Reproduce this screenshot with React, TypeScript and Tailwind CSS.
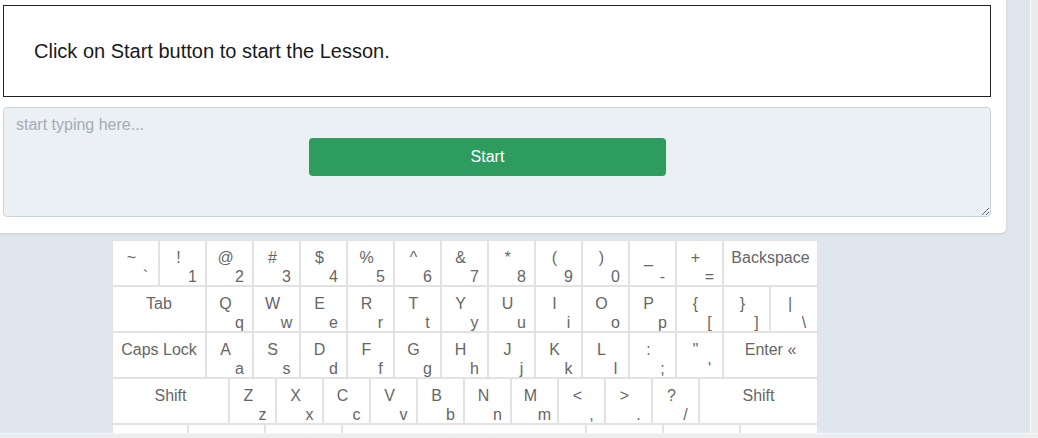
import React from "react";

type K = { t?: string; b?: string; label?: string; w?: string; grow?: boolean };

const row1: K[] = [
  ["~", "`"], ["!", "1"], ["@", "2"], ["#", "3"], ["$", "4"], ["%", "5"], ["^", "6"],
  ["&", "7"], ["*", "8"], ["(", "9"], [")", "0"], ["_", "-"], ["+", "="],
].map(([t, b]) => ({ t, b }));
row1.push({ label: "Backspace", grow: true });

const row2: K[] = [{ label: "Tab", w: "w-[94px]" }];
"QWERTYUIOP".split("").forEach((c) => row2.push({ t: c, b: c.toLowerCase() }));
row2.push({ t: "{", b: "[" }, { t: "}", b: "]" }, { t: "|", b: "\\", grow: true });

const row3: K[] = [{ label: "Caps Lock", w: "w-[94px]" }];
"ASDFGHJKL".split("").forEach((c) => row3.push({ t: c, b: c.toLowerCase() }));
row3.push({ t: ":", b: ";" }, { t: '"', b: "'" }, { label: "Enter \u00ab", grow: true });

const row4: K[] = [{ label: "Shift", w: "w-[117px]" }];
"ZXCVBNM".split("").forEach((c) => row4.push({ t: c, b: c.toLowerCase() }));
row4.push({ t: "<", b: "," }, { t: ">", b: "." }, { t: "?", b: "/" }, { label: "Shift", grow: true });

const row5: K[] = [
  { w: "w-[76px]" }, { w: "w-[77px]" }, { w: "w-[77px]" }, { w: "w-[244px]" },
  { w: "w-[77px]" }, { w: "w-[77px]" }, { grow: true },
];

function Key({ k }: { k: K }) {
  const width = k.grow ? "flex-1" : k.w ?? "w-[47px]";
  return (
    <div
      className={`${width} h-[46px] shrink-0 border border-[#e2e2e2] bg-white pt-[7px] text-[16px] leading-[19px] text-[#666666] overflow-hidden`}
    >
      {k.label !== undefined ? (
        <div className="text-center whitespace-nowrap">{k.label}</div>
      ) : k.t !== undefined ? (
        <>
          <div className="pr-[8px] text-center">{k.t}</div>
          <div className="pl-[20px] text-center">{k.b}</div>
        </>
      ) : null}
    </div>
  );
}

function Row({ keys }: { keys: K[] }) {
  return (
    <div className="flex">
      {keys.map((k, i) => (
        <Key key={i} k={k} />
      ))}
    </div>
  );
}

export default function App() {
  return (
    <div className="w-[1038px] h-[438px] bg-[#dfe6ee] flex flex-col overflow-hidden font-['Liberation_Sans',Arial,sans-serif]">
      <div className="flex flex-1 min-h-0">
        <div className="flex-1 flex flex-col min-w-0 overflow-hidden">
          <div className="w-[1006px] shrink-0 bg-white rounded-br-[5px] shadow-[0_1px_3px_rgba(0,0,0,0.12)] pt-[5px] pl-[3px] pr-[15px] pb-[16px]">
            <div className="h-[92px] border border-[#222] flex items-center pl-[30px] text-[20px] text-[#1a1a1a]">
              Click on Start button to start the Lesson.
            </div>
            <div className="relative mt-[10px] h-[110px]">
              <textarea
                className="w-full h-full block bg-[#ebf0f4] border border-[#cbd3da] rounded-[4px] px-[12px] pt-[7px] text-[16px] leading-[20px] placeholder:text-[#a3acb5] outline-none"
                placeholder="start typing here..."
              />
              <button className="absolute left-[306px] top-[31px] w-[357px] h-[38px] rounded-[4px] bg-[#2e9b5f] text-white text-[16px]">
                Start
              </button>
            </div>
          </div>
          <div className="ml-[112px] mt-[7px] w-[706px] shrink-0 flex flex-col">
            <Row keys={row1} />
            <Row keys={row2} />
            <Row keys={row3} />
            <Row keys={row4} />
            <Row keys={row5} />
          </div>
        </div>
        <div className="w-[8px] shrink-0 bg-[#ececec] border-l border-[#f8f8f8]" />
      </div>
      <div className="h-[5px] shrink-0 bg-[#ededed] border-t border-[#f8f8f8]" />
    </div>
  );
}
